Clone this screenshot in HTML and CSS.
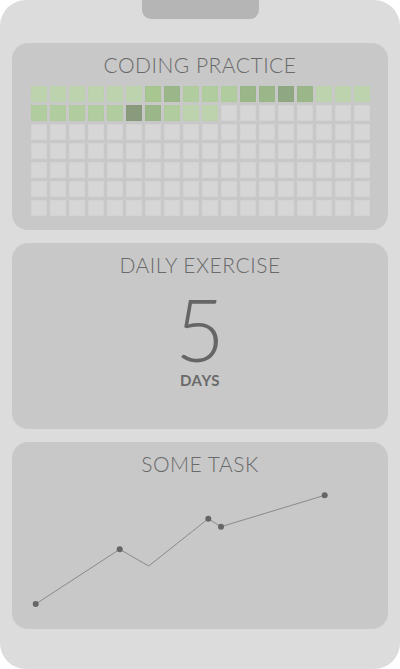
FILE: index.html
```html
<!DOCTYPE html>
<html>
<head>
<meta charset="utf-8">
<link rel="stylesheet" href="styles.css">
</head>
<body>
<div class="phone">
  <div class="notch"></div>
  <section class="card card-coding">
    <h2 class="title">CODING PRACTICE</h2>
    <div class="grid">
      <div class="c l1"></div><div class="c l1"></div><div class="c l1"></div><div class="c l1"></div><div class="c l1"></div><div class="c l1"></div><div class="c l3"></div><div class="c l4"></div><div class="c l2"></div><div class="c l2"></div><div class="c l2"></div><div class="c l4"></div><div class="c l4"></div><div class="c l5"></div><div class="c l4"></div><div class="c l1"></div><div class="c l1"></div><div class="c l1"></div>
      <div class="c l2"></div><div class="c l2"></div><div class="c l2"></div><div class="c l2"></div><div class="c l2"></div><div class="c l6"></div><div class="c l4"></div><div class="c l2"></div><div class="c l1"></div><div class="c l1"></div><div class="c"></div><div class="c"></div><div class="c"></div><div class="c"></div><div class="c"></div><div class="c"></div><div class="c"></div><div class="c"></div>
      <div class="c"></div><div class="c"></div><div class="c"></div><div class="c"></div><div class="c"></div><div class="c"></div><div class="c"></div><div class="c"></div><div class="c"></div><div class="c"></div><div class="c"></div><div class="c"></div><div class="c"></div><div class="c"></div><div class="c"></div><div class="c"></div><div class="c"></div><div class="c"></div>
      <div class="c"></div><div class="c"></div><div class="c"></div><div class="c"></div><div class="c"></div><div class="c"></div><div class="c"></div><div class="c"></div><div class="c"></div><div class="c"></div><div class="c"></div><div class="c"></div><div class="c"></div><div class="c"></div><div class="c"></div><div class="c"></div><div class="c"></div><div class="c"></div>
      <div class="c"></div><div class="c"></div><div class="c"></div><div class="c"></div><div class="c"></div><div class="c"></div><div class="c"></div><div class="c"></div><div class="c"></div><div class="c"></div><div class="c"></div><div class="c"></div><div class="c"></div><div class="c"></div><div class="c"></div><div class="c"></div><div class="c"></div><div class="c"></div>
      <div class="c"></div><div class="c"></div><div class="c"></div><div class="c"></div><div class="c"></div><div class="c"></div><div class="c"></div><div class="c"></div><div class="c"></div><div class="c"></div><div class="c"></div><div class="c"></div><div class="c"></div><div class="c"></div><div class="c"></div><div class="c"></div><div class="c"></div><div class="c"></div>
      <div class="c"></div><div class="c"></div><div class="c"></div><div class="c"></div><div class="c"></div><div class="c"></div><div class="c"></div><div class="c"></div><div class="c"></div><div class="c"></div><div class="c"></div><div class="c"></div><div class="c"></div><div class="c"></div><div class="c"></div><div class="c"></div><div class="c"></div><div class="c"></div>
    </div>
  </section>
  <section class="card card-exercise">
    <h2 class="title">DAILY EXERCISE</h2>
    <div class="big">5</div>
    <div class="unit">DAYS</div>
  </section>
  <section class="card card-task">
    <h2 class="title">SOME TASK</h2>
    <svg class="chart" width="376" height="150" viewBox="0 0 376 150">
      <polyline points="23.7,128 107.7,73.3 136.7,90 196.3,42.7 209,50.7 312.7,19.3" fill="none" stroke="#8a8a8a" stroke-width="1"/>
      <circle cx="23.7" cy="128" r="3" fill="#666"/>
      <circle cx="107.7" cy="73.3" r="3" fill="#666"/>
      <circle cx="196.3" cy="42.7" r="3" fill="#666"/>
      <circle cx="209" cy="50.7" r="3" fill="#666"/>
      <circle cx="312.7" cy="19.3" r="3" fill="#666"/>
    </svg>
  </section>
</div>
</body>
</html>
```
FILE: styles.css
```css
* { box-sizing: border-box; }
html, body { margin: 0; padding: 0; background: #ffffff; }
.phone {
  width: 400px;
  height: 669px;
  background: #dcdcdc;
  border-radius: 26px;
  display: flex;
  flex-direction: column;
  padding: 0 12px;
  gap: 13px;
  overflow: hidden;
}
.notch {
  align-self: center;
  width: 117px;
  height: 19px;
  background: #b5b5b5;
  border-radius: 0 0 9px 9px;
  margin-bottom: 11px;
}
.card {
  background: #c8c8c8;
  border-radius: 16px;
  padding-top: 10px;
  display: flex;
  flex-direction: column;
  align-items: center;
}
.card-coding { height: 187px; }
.card-exercise { height: 186px; }
.card-task { height: 187px; align-items: stretch; }
.title {
  margin: 0;
  font-family: Lato, sans-serif;
  font-weight: 300;
  font-size: 21px;
  line-height: 24px;
  color: #6a6a6a;
  text-align: center;
  letter-spacing: 0.5px;
}
.grid {
  margin-top: 9px;
  display: grid;
  grid-template-columns: repeat(18, 16px);
  grid-auto-rows: 16px;
  gap: 3px;
}
.c { background: #d6d6d6; border: 1px solid #d2d2d2; }
.l1 { background: #bcd3ae; border-color: #bad1ab; }
.l2 { background: #b1cc9e; border-color: #afca9b; }
.l3 { background: #a7c690; border-color: #a5c48d; }
.l4 { background: #9bb789; border-color: #99b587; }
.l5 { background: #8fa783; border-color: #8da581; }
.l6 { background: #899a7d; border-color: #87987b; }
.big {
  font-family: Lato, sans-serif;
  font-weight: 300;
  font-size: 86px;
  line-height: 68px;
  color: #666;
  margin-top: 18px;
}
.unit {
  font-family: Lato, sans-serif;
  font-weight: 700;
  font-size: 15px;
  line-height: 18px;
  color: #6a6a6a;
  letter-spacing: 0.5px;
  margin-top: 8px;
}
.chart { display: block; }
```
